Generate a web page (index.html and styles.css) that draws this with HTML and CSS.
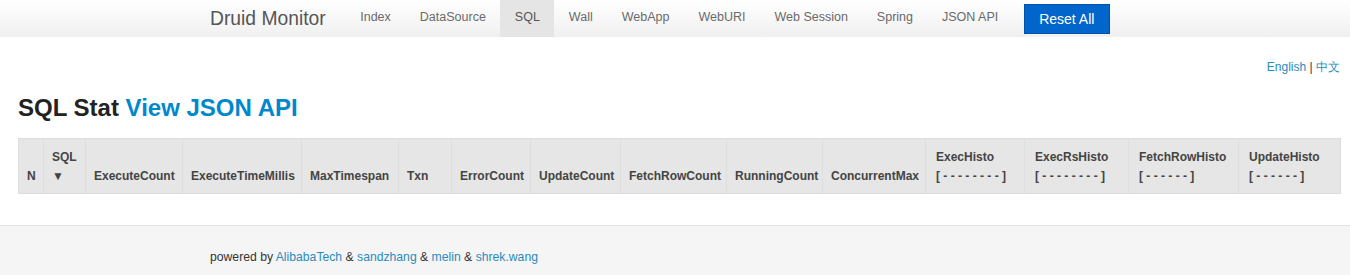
FILE: index.html
```html
<!DOCTYPE html>
<html lang="en">
<head>
    <meta charset="UTF-8">
    <title>Druid Stat Index</title>
    <link rel="stylesheet" href="styles.css">
</head>
<body>

    <!-- Top navigation -->
    <div class="navbar">
        <div class="container nav-inner">
            <a class="brand" href="#">Druid Monitor</a>
            <ul class="nav">
                <li><a href="#">Index</a></li>
                <li><a href="#">DataSource</a></li>
                <li class="active"><a href="#">SQL</a></li>
                <li><a href="#">Wall</a></li>
                <li><a href="#">WebApp</a></li>
                <li><a href="#">WebURI</a></li>
                <li><a href="#">Web Session</a></li>
                <li><a href="#">Spring</a></li>
                <li><a href="#">JSON API</a></li>
            </ul>
            <button class="btn-reset">Reset All</button>
        </div>
    </div>

    <div class="content">
        <div class="lang">
            <a href="#">English</a> | <a href="#">中文</a>
        </div>

        <h3 class="title">SQL Stat <a href="#">View JSON API</a></h3>

        <table class="stat-table">
            <thead>
                <tr>
                    <th class="c-n">N</th>
                    <th class="c-sql">SQL<br>&#9660;</th>
                    <th class="c-exec">ExecuteCount</th>
                    <th class="c-time">ExecuteTimeMillis</th>
                    <th class="c-max">MaxTimespan</th>
                    <th class="c-txn">Txn</th>
                    <th class="c-err">ErrorCount</th>
                    <th class="c-upd">UpdateCount</th>
                    <th class="c-fetch">FetchRowCount</th>
                    <th class="c-run">RunningCount</th>
                    <th class="c-conc">ConcurrentMax</th>
                    <th class="histo c-h1">ExecHisto<br>[ - - - - - - - - ]</th>
                    <th class="histo c-h2">ExecRsHisto<br>[ - - - - - - - - ]</th>
                    <th class="histo c-h3">FetchRowHisto<br>[ - - - - - - ]</th>
                    <th class="histo c-h4">UpdateHisto<br>[ - - - - - - ]</th>
                </tr>
            </thead>
            <tbody></tbody>
        </table>
    </div>

    <!-- Footer -->
    <div class="footer">
        <div class="container">
            powered by <a href="#">AlibabaTech</a> &amp; <a href="#">sandzhang</a> &amp; <a href="#">melin</a> &amp; <a href="#">shrek.wang</a>
        </div>
    </div>

</body>
</html>
```

FILE: styles.css
```css
/* Basic page styling */
body {
    margin: 0;
    font-family: "Liberation Sans", Arial, sans-serif;
    font-size: 13px;
    line-height: 20px;
    color: #333;
    background-color: #fff;
}
a {
    color: #0088cc;
    text-decoration: none;
}
.container {
    width: 930px;
    margin: 0 auto;
}

/* Navbar */
.navbar {
    height: 37px;
    background: linear-gradient(to bottom, #ffffff, #f0f0f0);
}
.nav-inner {
    display: flex;
    align-items: center;
    height: 37px;
}
.brand {
    font-size: 19.3px;
    color: #555;
    padding: 0 20px 0 0;
}
.nav {
    display: flex;
    list-style: none;
    margin: 0;
    padding: 0;
    height: 37px;
}
.nav li a {
    display: block;
    padding: 0 14.5px;
    line-height: 35px;
    height: 37px;
    color: #6a6a6a;
    font-size: 12.5px;
}
.nav li.active a {
    background-color: #e5e5e5;
    color: #555;
}
.btn-reset {
    margin-left: 11px;
    width: 86px;
    height: 30px;
    margin-top: 1px;
    font-family: "Liberation Sans", Arial, sans-serif;
    font-size: 14px;
    color: #fff;
    background-color: #0066cc;
    border: 1px solid #0052a8;
    cursor: pointer;
}

/* Content */
.content {
    padding: 20px 10px 31px 18px;
}
.lang {
    text-align: right;
    font-size: 12px;
    line-height: 20px;
}
.lang a {
    color: #2a8bbd;
}
.title {
    font-size: 24px;
    line-height: 30px;
    margin: 16px 0 15px;
    color: #222;
}

/* Stat table, column widths follow the original page */
.stat-table {
    width: 1322px;
    table-layout: fixed;
    border-collapse: collapse;
    background-color: #e6e6e6;
    border: 1px solid #dcdcdc;
}
.stat-table th {
    box-sizing: border-box;
    text-align: left;
    vertical-align: bottom;
    font-size: 12px;
    line-height: 19px;
    color: #444;
    padding: 9px 0 7px 8px;
    border-left: 1px solid #dedede;
    white-space: nowrap;
    overflow: hidden;
}
.stat-table th.histo {
    padding-left: 10px;
}
.c-n { width: 25px; }
.c-sql { width: 42px; }
.c-exec { width: 97px; }
.c-time { width: 119px; }
.c-max { width: 97px; }
.c-txn { width: 53px; }
.c-err { width: 79px; }
.c-upd { width: 90px; }
.c-fetch { width: 106px; }
.c-run { width: 96px; }
.c-conc { width: 103px; }
.c-h1 { width: 99px; }
.c-h2 { width: 104px; }
.c-h3 { width: 110px; }
.c-h4 { width: 102px; }

/* Footer */
.footer {
    background-color: #f5f5f5;
    border-top: 1px solid #e2e2e2;
    padding: 21px 0 12px;
    font-size: 12.2px;
    color: #333;
}
.footer a {
    color: #2a8bbd;
}
```
